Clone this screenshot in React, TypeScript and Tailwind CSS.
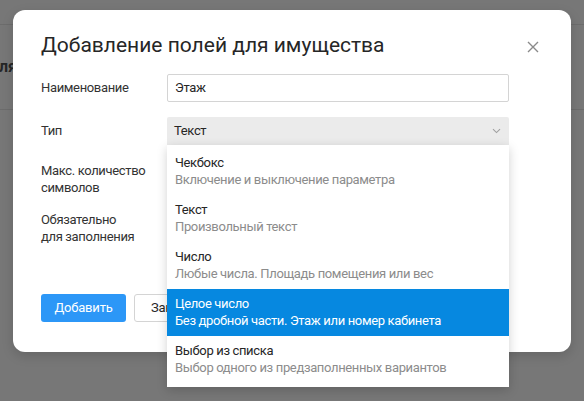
import React from "react";

const items = [
  { t: "Чекбокс", d: "Включение и выключение параметра" },
  { t: "Текст", d: "Произвольный текст" },
  { t: "Число", d: "Любые числа. Площадь помещения или вес" },
  { t: "Целое число", d: "Без дробной части. Этаж или номер кабинета", active: true },
  { t: "Выбор из списка", d: "Выбор одного из предзаполненных вариантов" },
];

export default function App() {
  return (
    <div
      className="relative w-[584px] h-[401px] overflow-hidden bg-[#777777]"
      style={{ fontFamily: "Roboto, 'Noto Sans', sans-serif" }}
    >
      {/* background page */}
      <div className="h-[25px] border-b border-[#6c6c6c]" />
      <div className="h-[85px] border-b border-[#6c6c6c] flex items-center">
        <span className="-ml-[1px] text-[16px] font-bold text-[#262626]">ля</span>
      </div>

      {/* modal */}
      <div className="absolute left-[13px] top-[10px] w-[558px] h-[342px] bg-white rounded-[12px] shadow-[0_4px_12px_rgba(0,0,0,0.15)] pt-[21px] pl-[28px] pr-[62px]">
        <div className="h-[28px] leading-[28px] text-[21px] text-[#262626]">
          Добавление полей для имущества
        </div>
        <button className="absolute right-[32px] top-[31px] w-[12px] h-[12px]">
          <svg width="12" height="12" viewBox="0 0 12 12" fill="none" stroke="#8a8a8a" strokeWidth="1.4">
            <path d="M1 1L11 11M11 1L1 11" />
          </svg>
        </button>

        <div className="mt-[15px] flex items-center text-[13px] tracking-[-0.35px] text-[#333]">
          <div className="w-[126px]">Наименование</div>
          <div className="flex-1 h-[28px] border border-[#d4d4d4] rounded-[2px] px-[7px] flex items-center text-[#262626]">
            Этаж
          </div>
        </div>

        <div className="mt-[15px] flex items-center text-[13px] tracking-[-0.35px] text-[#333]">
          <div className="w-[126px]">Тип</div>
          <div className="flex-1 h-[28px] bg-[#ebebeb] rounded-t-[2px] px-[7px] flex items-center justify-between text-[#262626]">
            <span>Текст</span>
            <svg width="9" height="6" viewBox="0 0 9 6" fill="none" stroke="#a0a0a0" strokeWidth="1.1" className="mr-[1px]">
              <path d="M1 1.2L4.5 4.6L8 1.2" />
            </svg>
          </div>
        </div>

        <div className="mt-[17px] flex text-[13px] tracking-[-0.35px] leading-[17px] text-[#333]">
          <div className="w-[126px]">
            Макс. количество
            <br />
            символов
          </div>
        </div>

        <div className="mt-[15px] flex text-[13px] tracking-[-0.35px] leading-[17px] text-[#333]">
          <div className="w-[126px]">
            Обязательно
            <br />
            для заполнения
          </div>
        </div>

        <div className="mt-[49px] flex gap-[8px] text-[13px] tracking-[-0.2px]">
          <button className="h-[28px] w-[85px] rounded-[3px] bg-[#2c97f7] text-white">Добавить</button>
          <button className="h-[28px] w-[85px] rounded-[3px] border border-[#d4d4d4] bg-white text-[#262626]">
            Закрыть
          </button>
        </div>

        {/* dropdown */}
        <div className="absolute left-[154px] top-[135px] w-[342px] bg-white pt-[3px] pb-[4px] shadow-[0_3px_10px_rgba(0,0,0,0.18)] text-[13px] leading-[17px] tracking-[-0.35px]">
          {items.map((it) => (
            <div
              key={it.t}
              className={
                it.active
                  ? "h-[47px] px-[8px] pt-[6px] bg-[#0688e0] text-white"
                  : "h-[47px] px-[8px] pt-[6px] text-[#262626]"
              }
            >
              <div>{it.t}</div>
              <div className={it.active ? "text-white" : "text-[#8c8c8c]"}>{it.d}</div>
            </div>
          ))}
        </div>
      </div>
    </div>
  );
}
